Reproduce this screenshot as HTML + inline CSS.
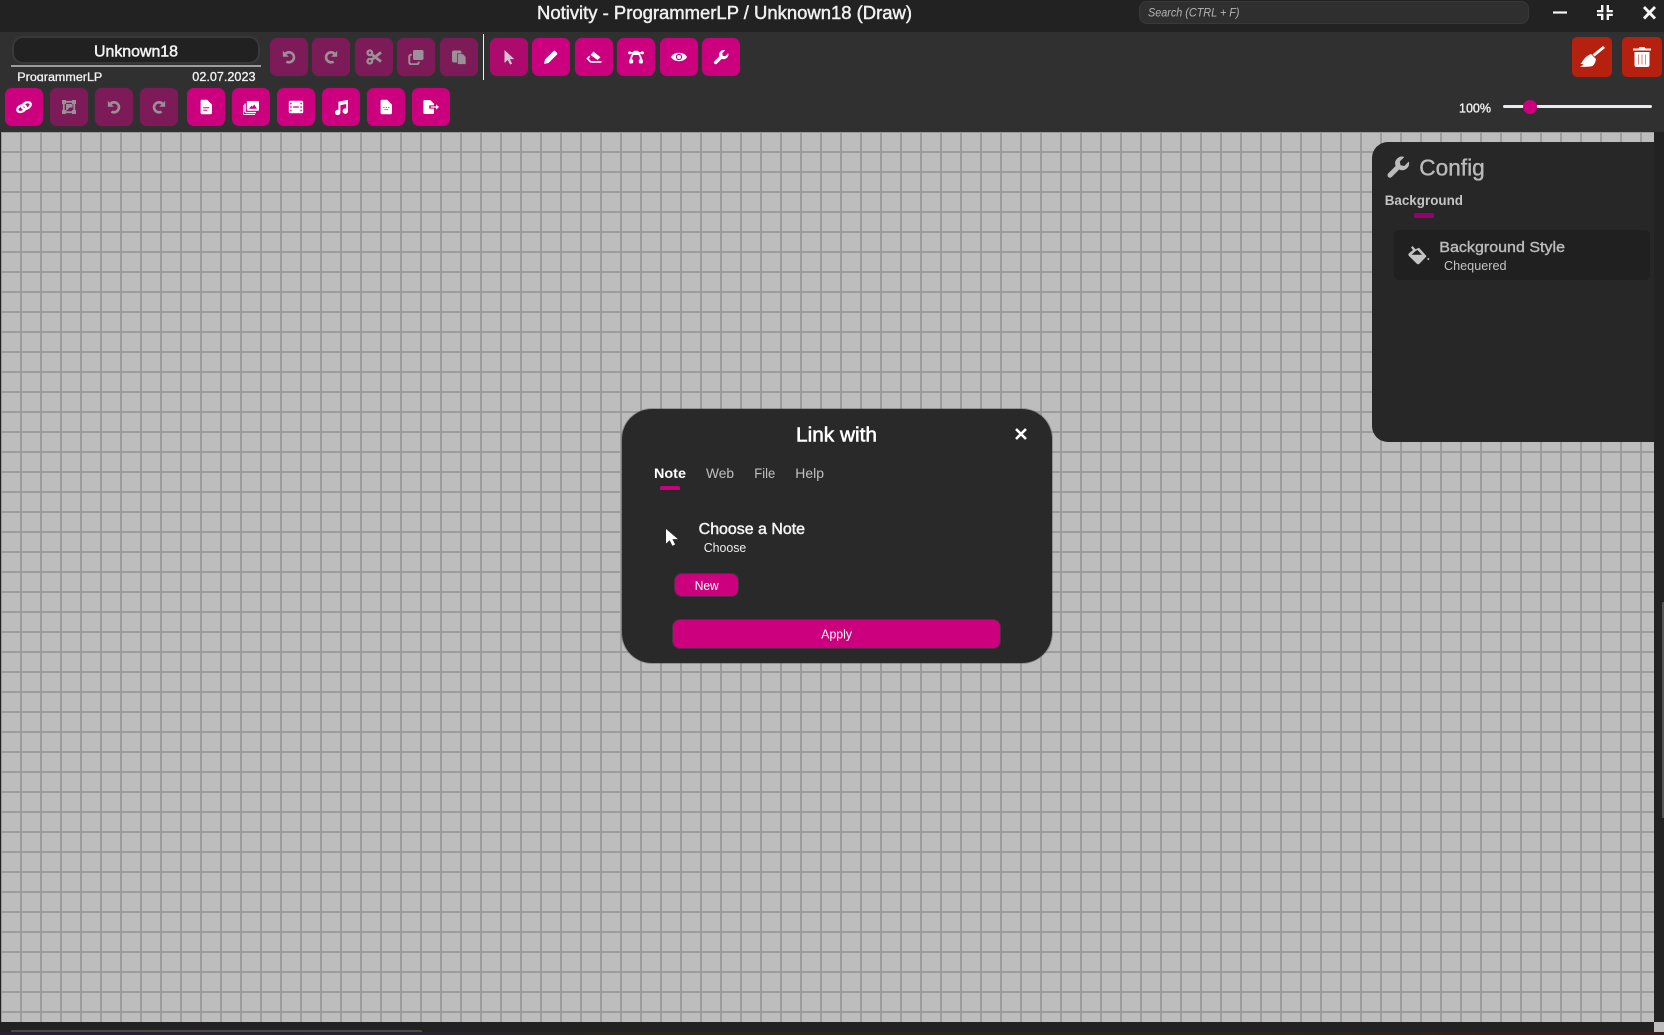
<!DOCTYPE html>
<html>
<head>
<meta charset="utf-8">
<title>Notivity</title>
<style>
html,body{margin:0;padding:0;width:1664px;height:1035px;overflow:hidden;background:#222;}
.a{position:absolute;}
#top{left:0;top:0;width:1664px;height:32px;background:#222;}
#bar{left:0;top:32px;width:1664px;height:100px;background:#303030;}
#canvas{left:1px;top:132px;width:1653px;height:890px;background-color:#bdbdbd;
background-image:linear-gradient(#9c9c9c 2px,transparent 2px),linear-gradient(90deg,#9c9c9c 2px,transparent 2px);
background-size:20px 20px;background-position:-1px -1px;}
.b{position:absolute;width:38px;height:38px;border-radius:7px;background:#cc007f;color:#fff;box-shadow:0 0 0 .6px #3b3038;}
.b svg{position:absolute;left:11px;top:11px;width:16px;height:16px;fill:currentColor;}
.d{background:#7d1a58;color:#9b9098;}
.r{position:absolute;top:37px;width:40px;height:40px;border-radius:5px;background:#b5200f;color:#fff;}
#txt{left:0;top:0;}
#txt text{font-family:"Liberation Sans",sans-serif;}
</style>
</head>
<body>
<svg width="0" height="0" style="position:absolute">
<defs>
<symbol id="undo" viewBox="0 0 16 16"><path d="M4.600 4.600A5 5 0 1 1 5.400 12.600" fill="none" stroke="currentColor" stroke-width="2.600"/><path d="M1.800 1.800v6h6z"/></symbol>
<symbol id="redo" viewBox="0 0 16 16"><path d="M11.400 4.600A5 5 0 1 0 10.600 12.600" fill="none" stroke="currentColor" stroke-width="2.600"/><path d="M14.200 1.800v6h-6z"/></symbol>
<symbol id="cut" viewBox="0 0 16 16"><circle cx="3.800" cy="3.800" r="2.300" fill="none" stroke="currentColor" stroke-width="2.300"/><circle cx="3.800" cy="12.200" r="2.300" fill="none" stroke="currentColor" stroke-width="2.300"/><path d="M5.500 5.200L15 12.600M5.500 10.800L15 3.400" stroke="currentColor" stroke-width="2.800" fill="none"/></symbol>
<symbol id="copy" viewBox="0 0 16 16"><rect x="5" y="1" width="10.500" height="10" rx="1.500"/><path d="M3.800 5.800H3A1.700 1.700 0 0 0 1.300 7.500v6A1.700 1.700 0 0 0 3 15.200h6a1.700 1.700 0 0 0 1.700-1.700V12.500" fill="none" stroke="currentColor" stroke-width="2"/></symbol>
<symbol id="paste" viewBox="0 0 16 16"><rect x="1" y="1.500" width="9.500" height="12" rx="2"/><path d="M6.500 4.800h5.500l3 3V15.500H6.500z" stroke="#7d1a58" stroke-width=".7"/></symbol>
<symbol id="cursor" viewBox="0 0 16 16"><path d="M3.500 1v13l3.300-3 2.300 4.600 2-1-2.200-4.500h4.400z"/></symbol>
<symbol id="pencil" viewBox="0 0 16 16"><path d="M1 15l1-4.500L10.300 2.200a1.600 1.600 0 0 1 2.200 0l1.300 1.300a1.600 1.600 0 0 1 0 2.200L5.500 14z"/></symbol>
<symbol id="eraser" viewBox="0 0 16 16"><path d="M7.500 2.500L14.500 8.200 11.500 11 4.500 6z"/><path d="M3.800 7.200L1.500 9.600 4.600 12.800H9" fill="none" stroke="currentColor" stroke-width="1.700"/><path d="M6 12h9.500v1.800H6z"/></symbol>
<symbol id="bez" viewBox="0 0 16 16"><rect x="5.400" y="1.800" width="5.200" height="4.200" rx=".8"/><path d="M.8 3.100h14.400v1.600H.8z"/><circle cx="1.600" cy="3.900" r="1.500"/><circle cx="14.400" cy="3.900" r="1.500"/><path d="M6 4.500C3.800 6 3 8.500 3 11M10 4.500C12.200 6 13 8.500 13 11" fill="none" stroke="currentColor" stroke-width="1.900"/><rect x="1" y="10.300" width="4.200" height="4.200" rx="1.500"/><rect x="10.800" y="10.300" width="4.200" height="4.200" rx="1.500"/></symbol>
<symbol id="eye" viewBox="0 0 16 16"><path fill-rule="evenodd" d="M0 8C2.800 2.400 13.200 2.400 16 8 13.200 13.600 2.800 13.600 0 8zM8 4.900a3.100 3.100 0 1 0 0 6.200 3.100 3.100 0 0 0 0-6.200z"/><circle cx="8" cy="8" r="2"/></symbol>
<symbol id="wrench" viewBox="0 0 16 16"><path d="M15.200 4.300l-3 3-2.500-.5-.5-2.500 3-3A4.600 4.600 0 0 0 6.400 7.300L1.400 12.300a1.700 1.700 0 0 0 2.400 2.400l5-5A4.600 4.600 0 0 0 15.200 4.300z"/></symbol>
<symbol id="link" viewBox="0 0 16 16"><ellipse cx="5.600" cy="9.600" rx="4.600" ry="3" transform="rotate(-28 5.600 9.600)" fill="none" stroke="currentColor" stroke-width="2.300"/><ellipse cx="10.400" cy="6.600" rx="4.600" ry="3" transform="rotate(-28 10.400 6.600)" fill="none" stroke="currentColor" stroke-width="2.300"/></symbol>
<symbol id="crop" viewBox="0 0 16 16"><rect x="1" y="1" width="4" height="4"/><rect x="11" y="1" width="4" height="4"/><rect x="1" y="11" width="4" height="4"/><rect x="11" y="11" width="4" height="4"/><path d="M2.800 3v10M13.200 3v10M3 2.800h10M3 13.200h10" stroke="currentColor" stroke-width="1.800" fill="none"/><path d="M5 5h6.500v3.500H8.500L6 11.500H5z"/></symbol>
<symbol id="file" viewBox="0 0 16 16"><path fill-rule="evenodd" d="M4 .8h5.200L14 5.600v8.200a1.400 1.400 0 0 1-1.400 1.400H4a1.400 1.400 0 0 1-1.400-1.400V2.200A1.400 1.400 0 0 1 4 .8zM5.200 8.200v1h6v-1zm0 2.600v1h4v-1z"/></symbol>
<symbol id="pdf" viewBox="0 0 16 16"><path fill-rule="evenodd" d="M4 .8h5.200L14 5.600v8.200a1.400 1.400 0 0 1-1.400 1.400H4a1.400 1.400 0 0 1-1.400-1.400V2.200A1.400 1.400 0 0 1 4 .8zM5.300 8.300v.7h1.200v-.7zm2.400 0v.7h1.200v-.7zm2.400 0v.7h1.200v-.7zM6.300 10.300v.6h3.900v-.6z"/></symbol>
<symbol id="imgs" viewBox="0 0 16 16"><path fill-rule="evenodd" d="M4.800 2h10.200a1 1 0 0 1 1 1v7.800a1 1 0 0 1-1 1H4.800a1 1 0 0 1-1-1V3a1 1 0 0 1 1-1zM5.800 9.800h8.200l-2.800-4.300-1.600 2.300-1-1.200z"/><path d="M2 4.600V12.200a1.400 1.400 0 0 0 1.400 1.400H13" fill="none" stroke="currentColor" stroke-width="1.400"/><path d="M.2 6v8a1.600 1.600 0 0 0 1.600 1.600H12" fill="none" stroke="currentColor" stroke-width="0.900"/></symbol>
<symbol id="film" viewBox="0 0 16 16"><path fill-rule="evenodd" d="M2 1.800h12a1.200 1.200 0 0 1 1.200 1.200v10a1.200 1.200 0 0 1-1.200 1.200H2A1.200 1.200 0 0 1 .8 13V3A1.200 1.200 0 0 1 2 1.800zM2.200 3.800v1.400h1.400V3.800zm0 3.500v1.400h1.400V7.300zm0 3.500v1.400h1.400v-1.400zM12.400 3.800v1.400h1.400V3.800zm0 3.500v1.400h1.400V7.300zm0 3.500v1.400h1.400v-1.400zM5.200 7.400v1.200h5.600V7.400z"/></symbol>
<symbol id="music" viewBox="0 0 16 16"><path d="M15 .8L5.400 2.800v8.100A2.700 2.700 0 1 0 7.400 13.400V6.300l5.800-1.300V9.600A2.700 2.700 0 1 0 15 12z"/></symbol>
<symbol id="exp" viewBox="0 0 16 16"><path d="M1.800 1h5.400l3.800 3.800V6.400H6.200v3.200H11v4a1.400 1.400 0 0 1-1.400 1.400H1.800A1.400 1.400 0 0 1 .4 13.600V2.400A1.400 1.400 0 0 1 1.800 1z"/><path d="M7.800 7.400h5.200V5.400L16 8l-3 2.600v-2H7.800z"/></symbol>
</defs>
</svg>

<div class="a" id="top"></div>
<div class="a" id="bar"></div>
<div class="a" id="canvas"></div>

<!-- bottom -->
<div class="a" style="left:0;top:1022px;width:1664px;height:10px;background:#222"></div>
<div class="a" style="left:11px;top:1030px;width:411px;height:2px;background:#4a4a4a;border-radius:1px 1px 0 0"></div>
<div class="a" style="left:0;top:1032px;width:1664px;height:3px;background:linear-gradient(90deg,#2b2032 0,#2a2230 25%,#2b2618 40%,#2a2618 75%,#3a1c1c 100%)"></div>
<div class="a" style="left:1654px;top:132px;width:10px;height:890px;background:#222"></div>
<div class="a" style="left:1662px;top:602px;width:2px;height:216px;background:#555;border-radius:1px 0 0 1px"></div>
<div class="a" style="left:1654px;top:1022px;width:10px;height:10px;background:#bdbdbd"></div>

<!-- search -->
<div class="a" style="left:1139px;top:1px;width:388px;height:21px;background:#2f2f2f;border:1px solid #393939;border-radius:8px"></div>

<!-- window icons -->
<svg class="a" style="left:1553px;top:5px" width="110" height="16" viewBox="0 0 110 16">
<path d="M0 6.400h14v2.200H0z" fill="#f4f4f4"/>
<path d="M44 5h4V0h2.400v7.300H44zM53.600 0h2.400v5h3.800v2.300h-6.200zM44 8.700h6.400V15H48v-4h-4zM53.600 8.700h6.200V11H56v4h-2.400z" fill="#f4f4f4"/>
<path d="M91 2L102 13.500M102 2L91 13.500" stroke="#f4f4f4" stroke-width="2.900" fill="none"/>
</svg>

<!-- title field -->
<div class="a" style="left:12px;top:36px;width:244px;height:24px;background:#212121;border:2px solid #393939;border-radius:11px"></div>
<div class="a" style="left:11px;top:65px;width:250px;height:2px;background:#9c9c9c"></div>

<!-- row 1 -->
<div class="b d" style="left:269.500px;top:38px"><svg><use href="#undo"/></svg></div>
<div class="b d" style="left:312px;top:38px"><svg><use href="#redo"/></svg></div>
<div class="b d" style="left:354.500px;top:38px"><svg><use href="#cut"/></svg></div>
<div class="b d" style="left:397px;top:38px"><svg><use href="#copy"/></svg></div>
<div class="b d" style="left:439.500px;top:38px"><svg><use href="#paste"/></svg></div>
<div class="a" style="left:483px;top:34px;width:1px;height:46px;background:#f0f0f0"></div>
<div class="b" style="left:489.500px;top:38px;background:#ad0a6e;color:#d6c3cf"><svg><use href="#cursor"/></svg></div>
<div class="b" style="left:532px;top:38px"><svg><use href="#pencil"/></svg></div>
<div class="b" style="left:574.500px;top:38px"><svg><use href="#eraser"/></svg></div>
<div class="b" style="left:617px;top:38px"><svg><use href="#bez"/></svg></div>
<div class="b" style="left:659.500px;top:38px"><svg><use href="#eye"/></svg></div>
<div class="b" style="left:702px;top:38px"><svg><use href="#wrench"/></svg></div>

<!-- row 2 -->
<div class="b" style="left:4.700px;top:88px"><svg><use href="#link"/></svg></div>
<div class="b d" style="left:49.500px;top:88px"><svg><use href="#crop"/></svg></div>
<div class="b d" style="left:94.500px;top:88px"><svg><use href="#undo"/></svg></div>
<div class="b d" style="left:139.500px;top:88px"><svg><use href="#redo"/></svg></div>
<div class="b" style="left:187px;top:88px"><svg><use href="#file"/></svg></div>
<div class="b" style="left:232px;top:88px"><svg><use href="#imgs"/></svg></div>
<div class="b" style="left:277px;top:88px"><svg><use href="#film"/></svg></div>
<div class="b" style="left:322px;top:88px"><svg><use href="#music"/></svg></div>
<div class="b" style="left:367px;top:88px"><svg><use href="#pdf"/></svg></div>
<div class="b" style="left:412px;top:88px"><svg><use href="#exp"/></svg></div>

<!-- red buttons -->
<div class="r" style="left:1572px">
<svg class="a" style="left:8px;top:9px" width="25" height="22" viewBox="0 0 25 22" fill="#fff">
<path d="M23 0l2 2L14.500 10.500l-2-2z"/>
<path d="M11 8l5 5c-.5 3-1.500 5.500-3.500 7-3 .8-8.500 1.200-12.500.5 1.500-.5 3-1.500 3.500-2.500-1 .3-2 .2-3-.2C3 16 3.500 11 11 8z"/>
</svg>
</div>
<div class="r" style="left:1622px">
<svg class="a" style="left:11px;top:10px" width="18" height="20" viewBox="0 0 18 20">
<path d="M6.500 0h5l1 1.500H18v2H0v-2h5.500z" fill="#fff"/>
<path fill="#fff" d="M1.500 5h15v13a2 2 0 0 1-2 2h-11a2 2 0 0 1-2-2z"/>
<path d="M5.500 7.500v10M9 7.500v10M12.500 7.500v10" stroke="#d9867c" stroke-width="1" fill="none"/>
</svg>
</div>

<!-- slider -->
<div class="a" style="left:1503px;top:105px;width:149px;height:3px;border-radius:2px;background:#e9e9f0"></div>
<div class="a" style="left:1523px;top:99.700px;width:14px;height:14px;border-radius:50%;background:#cc007f"></div>

<!-- config panel -->
<div class="a" style="left:1372px;top:142px;width:282px;height:300px;background:#272727;border-radius:16px 0 0 16px"></div>
<svg class="a" style="left:1386px;top:155px;color:#bbb;fill:#bbb" width="24" height="24" viewBox="0 0 16 16"><use href="#wrench"/></svg>
<div class="a" style="left:1413.700px;top:213px;width:20px;height:5px;background:#96006a;border-radius:1px"></div>
<div class="a" style="left:1394px;top:230px;width:256px;height:50px;background:#202020;border-radius:5px"></div>
<svg class="a" style="left:1407px;top:245px" width="23" height="21" viewBox="0 0 23 21" fill="#c4c4c4">
<path fill-rule="evenodd" d="M5.500 1l3 3.200L12 2.800 19 10.500c.4.500.4 1 0 1.400l-6.500 6.700c-.8.800-2 .8-2.800 0L2 11c-.8-.8-.8-2 0-2.800L6 5 4 2.500zM8.600 6L4.500 9.800H15L10.500 5z"/>
<circle cx="21.300" cy="14" r="1"/>
</svg>

<!-- dialog -->
<div class="a" style="left:622px;top:408.500px;width:429.500px;height:254.500px;background:#292929;border-radius:30px;box-shadow:0 0 0 1px rgba(85,85,85,.4)"></div>
<svg class="a" style="left:1014px;top:427px" width="14" height="14" viewBox="0 0 14 14"><path d="M2 2L12 12M12 2L2 12" stroke="#fff" stroke-width="2.600" fill="none"/></svg>
<div class="a" style="left:660px;top:486px;width:20px;height:4px;background:#cc007f;border-radius:2px 2px 0 0"></div>
<svg class="a" style="left:665px;top:528px" width="15" height="19" viewBox="0 0 15 19" fill="#fff"><path d="M1 1v14.500l3.700-3.300 2.700 5.600 2.700-1.300-2.700-5.400h5.500z"/></svg>
<div class="a" style="left:674.500px;top:573.500px;width:63.500px;height:22.500px;background:#cc007f;border-radius:7px;box-shadow:0 0 0 1px #4a3242"></div>
<div class="a" style="left:673px;top:619.500px;width:327px;height:28px;background:#cc007f;border-radius:7px;box-shadow:0 0 0 1px #4a3242"></div>

<!-- all text -->
<svg class="a" id="txt" width="1664" height="1035" viewBox="0 0 1664 1035">
<defs><clipPath id="c1"><rect x="0" y="68" width="300" height="13.500"/></clipPath></defs>
<text x="537" y="19" font-size="18" fill="#f0f0f0" stroke="#f0f0f0" stroke-width=".45" textLength="375" lengthAdjust="spacingAndGlyphs">Notivity - ProgrammerLP / Unknown18 (Draw)</text>
<text x="1148" y="16.500" font-size="12" font-style="italic" fill="#b4b4b4" textLength="91.500" lengthAdjust="spacingAndGlyphs">Search (CTRL + F)</text>
<text x="94" y="56.700" font-size="16" fill="#f2f2f2" stroke="#f2f2f2" stroke-width=".5" textLength="84" lengthAdjust="spacingAndGlyphs">Unknown18</text>
<g clip-path="url(#c1)"><text x="17.300" y="81" font-size="12" fill="#f2f2f2" stroke="#f2f2f2" stroke-width=".3" textLength="85" lengthAdjust="spacingAndGlyphs">ProgrammerLP</text></g>
<text x="192.300" y="81" font-size="12.500" fill="#f2f2f2" stroke="#f2f2f2" stroke-width=".3" textLength="63.200" lengthAdjust="spacingAndGlyphs">02.07.2023</text>
<text x="1459" y="112.300" font-size="13" fill="#f2f2f2" stroke="#f2f2f2" stroke-width=".35" textLength="32" lengthAdjust="spacingAndGlyphs">100%</text>
<text x="1419.300" y="175.700" font-size="23" fill="#bbb" stroke="#bbb" stroke-width=".35" textLength="65.400" lengthAdjust="spacingAndGlyphs">Config</text>
<text x="1384.700" y="205" font-size="13.500" font-weight="bold" fill="#c4c4c4" textLength="78.300" lengthAdjust="spacingAndGlyphs">Background</text>
<text x="1439.300" y="252" font-size="15" fill="#bbb" stroke="#bbb" stroke-width=".4" textLength="125.700" lengthAdjust="spacingAndGlyphs">Background Style</text>
<text x="1444" y="270" font-size="13" fill="#c4c4c4" textLength="62.500" lengthAdjust="spacingAndGlyphs">Chequered</text>
<text x="796" y="441.300" font-size="20" fill="#fff" stroke="#fff" stroke-width=".55" textLength="81" lengthAdjust="spacingAndGlyphs">Link with</text>
<text x="654" y="478" font-size="14" font-weight="bold" fill="#fff" textLength="32" lengthAdjust="spacingAndGlyphs">Note</text>
<text x="706" y="478" font-size="14" fill="#c0c0c0" textLength="28" lengthAdjust="spacingAndGlyphs">Web</text>
<text x="754.300" y="478" font-size="14" fill="#c0c0c0" textLength="21" lengthAdjust="spacingAndGlyphs">File</text>
<text x="795.300" y="478" font-size="14" fill="#c0c0c0" textLength="28.700" lengthAdjust="spacingAndGlyphs">Help</text>
<text x="698.700" y="534" font-size="15.500" fill="#f4f4f4" stroke="#f4f4f4" stroke-width=".45" textLength="106.300" lengthAdjust="spacingAndGlyphs">Choose a Note</text>
<text x="703.700" y="552" font-size="13" fill="#eee" textLength="42.600" lengthAdjust="spacingAndGlyphs">Choose</text>
<text x="694.700" y="590" font-size="12.500" fill="#fff" textLength="24" lengthAdjust="spacingAndGlyphs">New</text>
<text x="821.300" y="638.300" font-size="13" fill="#fff" textLength="30.700" lengthAdjust="spacingAndGlyphs">Apply</text>
</svg>
</body>
</html>
